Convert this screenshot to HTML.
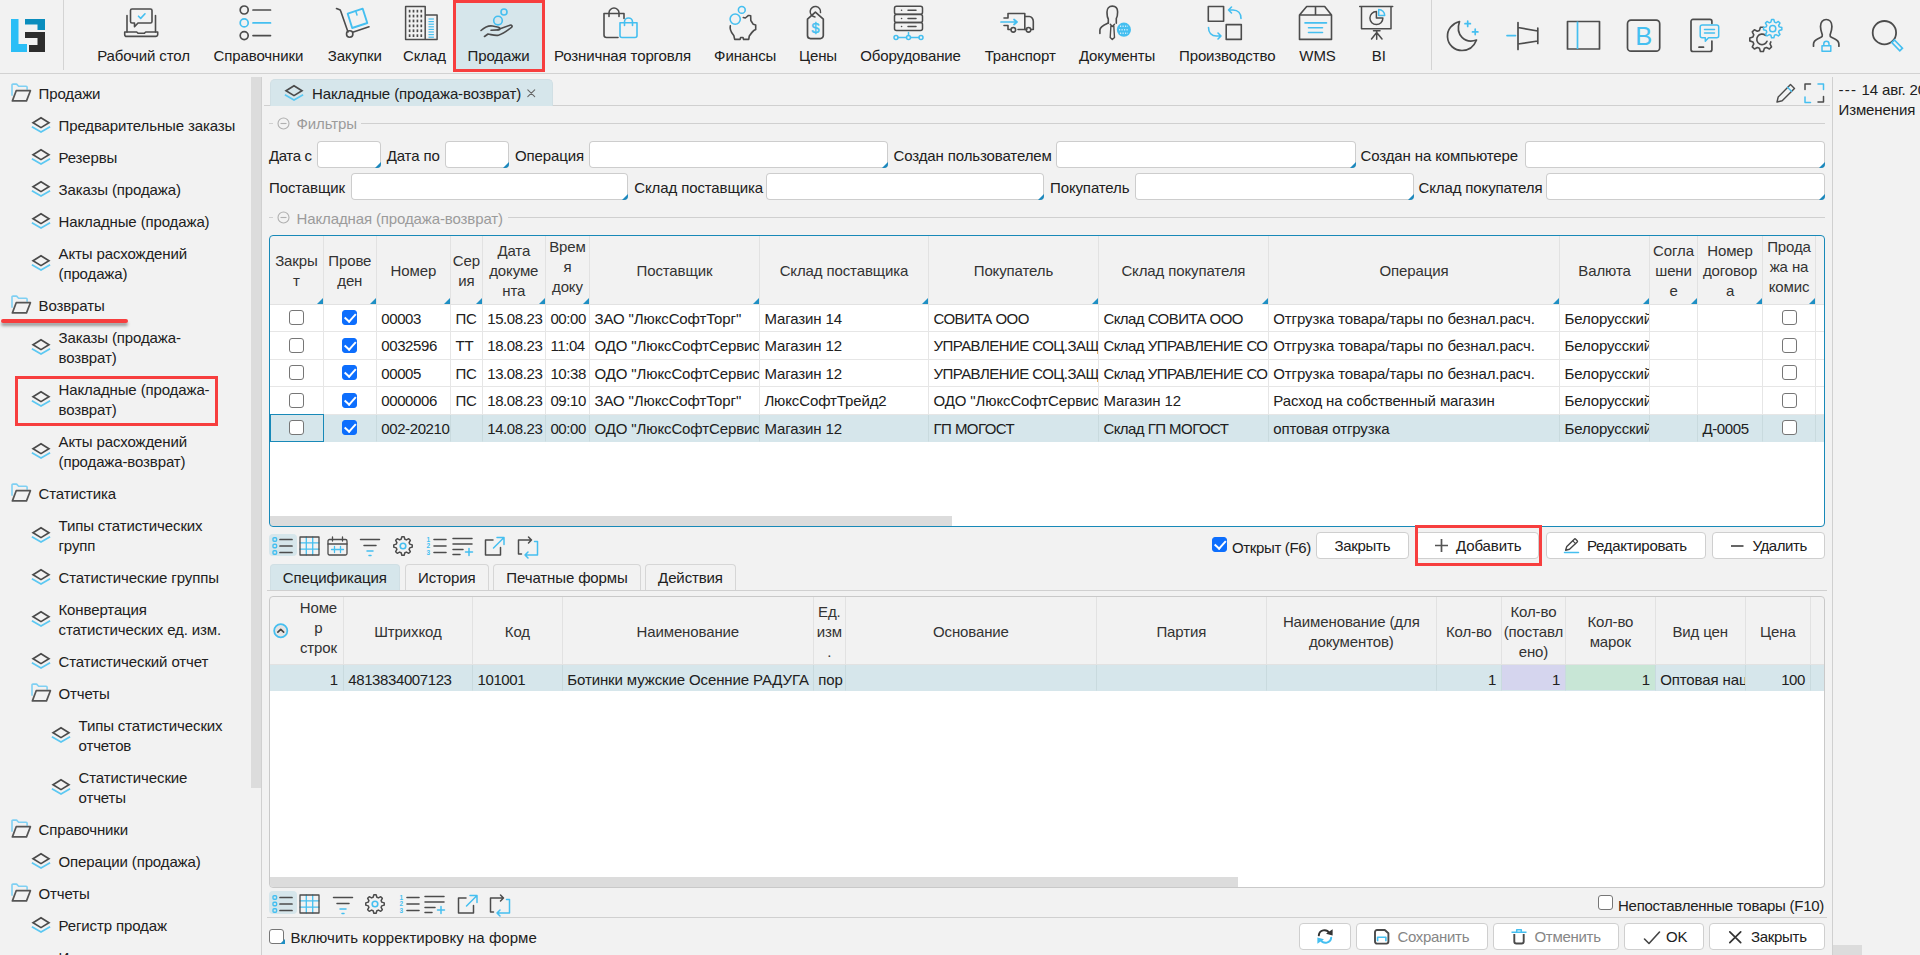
<!DOCTYPE html>
<html lang="ru"><head><meta charset="utf-8"><title>Накладные (продажа-возврат)</title>
<style>
*{box-sizing:border-box;margin:0;padding:0}
html,body{width:1920px;height:955px;overflow:hidden;background:#f2f2f2}
body{font-family:"Liberation Sans",sans-serif;font-size:15px;color:#202020;letter-spacing:-0.12px;position:relative;line-height:20px}
.abs{position:absolute}
svg{display:block;overflow:visible}
/* top bar */
#top{position:absolute;left:0;top:0;width:1920px;height:74px;border-bottom:1px solid #d2d2d2}
.vsep{position:absolute;top:0;width:1px;height:70px;background:#d4d4d4}
.ti{position:absolute;top:0;height:71px;width:180px;margin-left:-90px;text-align:center;white-space:nowrap}
.ti span{position:absolute;left:0;right:0;top:46px;line-height:20px}
.ti svg{position:absolute;left:50%;top:3px;margin-left:-22px}
.ri{position:absolute;top:18px}
#selbox{position:absolute;left:452.5px;top:-0.5px;width:92px;height:72.5px;background:#d6e6eb;border:3px solid #f73e3e}
/* sidebar */
#side{position:absolute;left:0;top:74px;width:262px;height:881px;overflow:hidden}
#sthumb{position:absolute;left:251px;top:77px;width:10px;height:711px;background:#dcdcdc}
#sline{position:absolute;left:261px;top:77px;width:1px;height:878px;background:#d0d0d0}
.tn{position:absolute;left:0;white-space:nowrap;line-height:20px}
/* main */
.hl{position:absolute;height:1px;background:#d0d0d0}
.inp{position:absolute;height:26px;background:#fff;box-shadow:inset 0 0 0 1px #cdcdcd;border-radius:4px;overflow:hidden}
.inp:after{content:"";position:absolute;right:0;bottom:0;border-style:solid;border-width:0 0 6px 6px;border-color:transparent transparent #1b88bd transparent}
.lbl{position:absolute;white-space:nowrap;line-height:20px}
.gray{color:#9b9b9b}
.grid{position:absolute;background:#fff;border-radius:4px;overflow:hidden}
.gb{position:absolute;border-radius:4px;pointer-events:none}
.hc{position:absolute;top:0;background:#f2f2f2;border-right:1px solid #e2e2e2;border-bottom:1px solid #e2e2e2;display:flex;align-items:center;justify-content:center;text-align:center;color:#333;overflow:hidden;white-space:nowrap;padding:2.5px 0 0 0}
.hc.tri:after{content:"";position:absolute;right:0;bottom:0;border-style:solid;border-width:0 0 6px 6px;border-color:transparent transparent #1e8fc4 transparent}
.row{position:absolute;left:0;height:28px}
.c{position:absolute;top:0;height:100%;border-right:1px solid #e6e6e6;border-bottom:1px solid #e6e6e6;white-space:nowrap;overflow:hidden;padding:4px 0 0 4.5px;line-height:20px}
.c.r{text-align:right;padding-right:5px}
.sel .c{background:#d6e6eb;border-right-color:#c9dade;border-bottom-color:#d6e6eb}
.cb{position:absolute;width:15px;height:15px;border:1.5px solid #767676;border-radius:3px;background:#fff}
.cb.on{background:#0d6efd;border-color:#0d6efd}
.cb.on:after{content:"";position:absolute;left:3.6px;top:0.4px;width:4.5px;height:8.5px;border:solid #fff;border-width:0 2px 2px 0;transform:rotate(42deg)}
.btn{position:absolute;height:27px;background:#fff;border:1px solid #cfcfcf;border-radius:4px;white-space:nowrap;line-height:20px}
.btn span{position:absolute;top:3px}
.btn svg{position:absolute}
.tab{position:absolute;border:1px solid #d6d6d6;border-bottom:none;border-radius:4px 4px 0 0;text-align:center;white-space:nowrap}
.tab.on{background:#d6e6eb;border-color:#d0dfe4}
.tb{position:absolute}
.num{letter-spacing:-0.4px}
.uc{letter-spacing:-0.55px}
</style></head><body>
<div id="top">
<div class="abs" style="left:11px;top:19px"><svg width="34" height="33" viewBox="0 0 34 33"><path d="M0 0h7.5v25h8.5v8H0z" fill="#2bbef6"/><path d="M14 0h20v11h-7.5V5.5H14z" fill="#0a8dbd"/><path d="M14 13h20v20H18v-7h8.5v-7H14z" fill="#2d2d2d"/></svg></div>
<div class="vsep" style="left:63px"></div>
<div id="selbox"></div>
<div class="ti" style="left:143.5px"><svg width="44" height="40" viewBox="0 0 44 40" fill="none" stroke="#4c4c4c" stroke-width="1.6" stroke-linecap="round" stroke-linejoin="round"><path d="M5 12.6v16.4M33.5 12.6v16.4"/><path d="M2.7 29h12l1.5 1.3h6l1.5-1.3h12v2.4a2 2 0 0 1-2 2H4.7a2 2 0 0 1-2-2z"/><path d="M10 6h18.5a1.5 1.5 0 0 1 1.5 1.5v11a1.5 1.5 0 0 1-1.5 1.5H16l-3.5 3.7V20H10a1.5 1.5 0 0 1-1.5-1.5v-11A1.5 1.5 0 0 1 10 6z"/><path d="M16.5 13.2l2.2 2.2 4.3-4.6" stroke="#45bff0"/></svg><span>Рабочий стол</span></div>
<div class="ti" style="left:258.4px"><svg width="44" height="40" viewBox="0 0 44 40" fill="none" stroke="#4c4c4c" stroke-width="1.7" stroke-linecap="round" stroke-linejoin="round"><circle cx="8.2" cy="7" r="4"/><path d="M17 7h17.5"/><circle cx="8.2" cy="19.9" r="4" stroke="#45bff0"/><path d="M17 19.9h17.5" stroke="#45bff0"/><circle cx="8.2" cy="32.6" r="4"/><path d="M17 32.6h17.5"/></svg><span>Справочники</span></div>
<div class="ti" style="left:354.8px"><svg width="44" height="40" viewBox="0 0 44 40" fill="none" stroke="#4c4c4c" stroke-width="1.6" stroke-linecap="round" stroke-linejoin="round"><path d="M3.5 5.5l3.2 1.3a1.5 1.5 0 0 1 .9 1L15 29"/><circle cx="16.7" cy="31" r="3.2"/><path d="M19.7 29.3L36 23.8"/><path d="M14.7 10.7l15-5 4.6 14.3-15.1 5z" stroke="#45bff0" stroke-width="1.9"/><path d="M22.7 8.1l1.3 4 " stroke="#45bff0" stroke-width="1.5"/></svg><span>Закупки</span></div>
<div class="ti" style="left:424.4px"><svg width="44" height="40" viewBox="0 0 44 40" fill="none" stroke="#4c4c4c" stroke-width="1.5" stroke-linecap="round" stroke-linejoin="round"><path d="M3.6 36.4V3.5h19.6v32.9zM23.2 12h11.9v24.4H23.2"/><path d="M7.6 6.8v2.700" stroke-width="1.700" stroke-linecap="butt"/><path d="M11.5 6.8v2.700" stroke-width="1.700" stroke-linecap="butt"/><path d="M15.4 6.8v2.700" stroke-width="1.700" stroke-linecap="butt"/><path d="M19.3 6.8v2.700" stroke-width="1.700" stroke-linecap="butt"/><path d="M7.6 11.7v2.700" stroke-width="1.700" stroke-linecap="butt"/><path d="M11.5 11.7v2.700" stroke-width="1.700" stroke-linecap="butt"/><path d="M15.4 11.7v2.700" stroke-width="1.700" stroke-linecap="butt"/><path d="M19.3 11.7v2.700" stroke-width="1.700" stroke-linecap="butt"/><path d="M7.6 16.6v2.700" stroke-width="1.700" stroke-linecap="butt"/><path d="M11.5 16.6v2.700" stroke-width="1.700" stroke-linecap="butt"/><path d="M15.4 16.6v2.700" stroke-width="1.700" stroke-linecap="butt"/><path d="M19.3 16.6v2.700" stroke-width="1.700" stroke-linecap="butt"/><path d="M7.6 21.5v2.700" stroke-width="1.700" stroke-linecap="butt"/><path d="M11.5 21.5v2.700" stroke-width="1.700" stroke-linecap="butt"/><path d="M15.4 21.5v2.700" stroke-width="1.700" stroke-linecap="butt"/><path d="M19.3 21.5v2.700" stroke-width="1.700" stroke-linecap="butt"/><path d="M7.6 26.4v2.700" stroke-width="1.700" stroke-linecap="butt"/><path d="M11.5 26.4v2.700" stroke-width="1.700" stroke-linecap="butt"/><path d="M15.4 26.4v2.700" stroke-width="1.700" stroke-linecap="butt"/><path d="M19.3 26.4v2.700" stroke-width="1.700" stroke-linecap="butt"/><path d="M7.6 31.3v2.700" stroke-width="1.700" stroke-linecap="butt"/><path d="M11.5 31.3v2.700" stroke-width="1.700" stroke-linecap="butt"/><path d="M15.4 31.3v2.700" stroke-width="1.700" stroke-linecap="butt"/><path d="M19.3 31.3v2.700" stroke-width="1.700" stroke-linecap="butt"/><path d="M26.5 16.0h5.4" stroke="#45bff0" stroke-width="1.2" stroke-linecap="butt"/><path d="M26.5 18.6h5.4" stroke="#45bff0" stroke-width="1.2" stroke-linecap="butt"/><path d="M26.5 21.2h5.4" stroke="#45bff0" stroke-width="1.2" stroke-linecap="butt"/><path d="M26.5 23.8h5.4" stroke="#45bff0" stroke-width="1.2" stroke-linecap="butt"/><path d="M26.5 26.4h5.4" stroke="#45bff0" stroke-width="1.2" stroke-linecap="butt"/><path d="M26.5 29.0h5.4" stroke="#45bff0" stroke-width="1.2" stroke-linecap="butt"/><path d="M26.5 31.6h5.4" stroke="#45bff0" stroke-width="1.2" stroke-linecap="butt"/><path d="M26.5 34.2h5.4" stroke="#45bff0" stroke-width="1.2" stroke-linecap="butt"/></svg><span>Склад</span></div>
<div class="ti" style="left:498.5px"><svg width="44" height="40" viewBox="0 0 44 40" fill="none" stroke="#4c4c4c" stroke-width="1.6" stroke-linecap="round" stroke-linejoin="round"><path d="M4 27.5c4-3.5 8-5.2 11.5-4.5l6 1.2c2 .4 1.8 2.6 0 2.7l-7.5.4"/><path d="M21 26.6l12-4.4c1.7-.6 2.8 1.2 1.5 2.2-4 3.2-9 6.800-13 7.8-3.500.9-7.5-.8-10.500-1.200L7.500 33.500"/><circle cx="21" cy="17.600" r="4.300" stroke="#45bff0"/><circle cx="27" cy="9" r="3" stroke="#45bff0"/></svg><span>Продажи</span></div>
<div class="ti" style="left:622.5px"><svg width="44" height="40" viewBox="0 0 44 40" fill="none" stroke="#4c4c4c" stroke-width="1.6" stroke-linecap="round" stroke-linejoin="round"><path d="M17 34.500H5.500a2.500 2.500 0 0 1-2.500-2.500V10.500h20v5"/><path d="M8 13.500V10a5 5 0 0 1 10 0v3.500"/><path d="M19 19.800h17v12.700a2 2 0 0 1-2 2H21a2 2 0 0 1-2-2z" stroke="#45bff0"/><path d="M23.500 22.500v-3.500a4 4 0 0 1 8 0v3.500" stroke="#45bff0"/></svg><span>Розничная торговля</span></div>
<div class="ti" style="left:745.2px"><svg width="44" height="40" viewBox="0 0 44 40" fill="none" stroke="#4c4c4c" stroke-width="1.6" stroke-linecap="round" stroke-linejoin="round"><path d="M7.300 22.800C6.300 27.500 9.300 30.500 10.800 32.500L11.700 36.400H17.100L17.600 34.500H20L20.600 36.400H25.700L26.300 33C28 30.500 29.500 28.500 30.800 27.500L32.700 26.500V22L30.300 21.300C29.500 20 28.500 18.500 27.800 17.500L27.700 12.700C26.500 12.300 25.500 12.500 25.200 12.600L22.300 15 20.300 14.500"/><circle cx="12.200" cy="16.100" r="5.100" stroke="#45bff0"/><circle cx="18.800" cy="6.900" r="3.400" stroke="#45bff0"/></svg><span>Финансы</span></div>
<div class="ti" style="left:818px"><svg width="44" height="40" viewBox="0 0 44 40" fill="none" stroke="#4c4c4c" stroke-width="1.6" stroke-linecap="round" stroke-linejoin="round"><path d="M19.400 9.200L27.300 16.200V32.600a3 3 0 0 1-3 3H14.500a3 3 0 0 1-3-3V16.200z" stroke-width="1.700"/><path d="M24.500 9.600A5.200 5.200 0 1 0 19 13.900" stroke-width="1.500"/><text x="19.400" y="30.300" font-family="Liberation Sans,sans-serif" font-size="14.500" text-anchor="middle" fill="#45bff0" stroke="#45bff0" stroke-width=".4">$</text></svg><span>Цены</span></div>
<div class="ti" style="left:910.5px"><svg width="44" height="40" viewBox="0 0 44 40" fill="none" stroke="#4c4c4c" stroke-width="1.5" stroke-linecap="round" stroke-linejoin="round"><rect x="5.500" y="3.3" width="28" height="8" rx="2"/><path d="M12.500 7.3h.1"/><path d="M19 7.3h8" /><rect x="5.500" y="11.4" width="28" height="8" rx="2"/><path d="M12.500 15.4h.1"/><path d="M19 15.4h8" /><rect x="5.500" y="19.5" width="28" height="8" rx="2"/><path d="M12.500 23.5h.1"/><path d="M19 23.5h8" /><path d="M9 34.500h8.500M21.500 34.500H30M19.500 29.500v3" stroke="#45bff0"/><circle cx="7" cy="34.500" r="2" stroke="#45bff0"/><circle cx="19.500" cy="34.500" r="2" stroke="#45bff0"/><circle cx="32" cy="34.500" r="2" stroke="#45bff0"/></svg><span>Оборудование</span></div>
<div class="ti" style="left:1020.2px"><svg width="44" height="40" viewBox="0 0 44 40" fill="none" stroke="#4c4c4c" stroke-width="1.6" stroke-linecap="round" stroke-linejoin="round"><path d="M6 15h4v-4.500h16.800V26.500H20M12.500 26.500H10v-4H6"/><path d="M26.800 13.500h4.500c2.200 0 4 2.500 4 5v8h-1.800M26.800 26.500h2"/><circle cx="15.300" cy="26.800" r="2.300"/><circle cx="30.500" cy="26.800" r="2.300"/><path d="M3 19h16M16 16.500l3 2.500-3 2.500" stroke="#45bff0" stroke-width="1.700"/></svg><span>Транспорт</span></div>
<div class="ti" style="left:1117px"><svg width="44" height="40" viewBox="0 0 44 40" fill="none" stroke="#4c4c4c" stroke-width="1.6" stroke-linecap="round" stroke-linejoin="round"><path d="M13.300 20V16C12.300 14.500 12 13 12 9 12 5.500 14 3.100 17.300 3.100S22.600 5.500 22.600 9C22.600 12.500 22.300 14 21.300 15.500V20.300"/><path d="M13.300 20C9 22 5 23.500 4.900 27V30.500"/><path d="M15.300 21.300l2 2.200 2.200-2.200M15.900 23l-.7 11.500 2.100 2.100 2.200-2.100-.7-11.500" stroke-width="1.400"/><circle cx="28.900" cy="26.700" r="7.100" fill="#45bff0" stroke="none"/><path d="M24 26.700h10M25 23.200h8M25 30.200h8" stroke="#c9ecfb" stroke-width="1.400" stroke-dasharray="1.200 1.300" stroke-linecap="butt"/></svg><span>Документы</span></div>
<div class="ti" style="left:1227.2px"><svg width="44" height="40" viewBox="0 0 44 40" fill="none" stroke="#4c4c4c" stroke-width="1.6" stroke-linecap="round" stroke-linejoin="round"><rect x="3.300" y="3.500" width="15.300" height="14.700"/><rect x="21.200" y="21.600" width="15.100" height="14.800"/><path d="M36 15.500c0-5-3-8.500-8-8.500h-4.500M26.500 4l-3 3 3 3" stroke="#45bff0"/><path d="M3.500 24.500c0 5 3 8.500 8 8.500H16M13 30l3 3-3 3" stroke="#45bff0"/></svg><span>Производство</span></div>
<div class="ti" style="left:1317.5px"><svg width="44" height="40" viewBox="0 0 44 40" fill="none" stroke="#4c4c4c" stroke-width="1.6" stroke-linecap="round" stroke-linejoin="round"><path d="M3.500 12h32v24.400h-32zM3.500 12l7.200-8.500h18l6.800 8.500M19.500 3.500V12"/><path d="M9 19.900h21.500M12.500 24.700h14M12.500 29.500h14" stroke="#45bff0"/></svg><span>WMS</span></div>
<div class="ti" style="left:1378.8px"><svg width="44" height="40" viewBox="0 0 44 40" fill="none" stroke="#4c4c4c" stroke-width="1.5" stroke-linecap="round" stroke-linejoin="round"><path d="M2.700 3.500h33M4.500 3.500v22.200h29.500V3.500"/><path d="M19.400 8.600a6.500 6.500 0 1 0 6.500 6.500h-6.500z"/><path d="M21.700 6.500v6h6a6 6 0 0 0-6-6z" stroke="#45bff0"/><path d="M16.500 27.700h6.500M19.700 27.700v8.500M19.700 29.500l-5.200 6.500M19.700 29.500l5.300 6.500"/></svg><span>BI</span></div>
<div class="vsep" style="left:1431px"></div>
<div class="ri" style="left:1445px"><svg width="36" height="36" viewBox="0 0 36 36" fill="none" stroke="#4c4c4c" stroke-width="1.7" stroke-linecap="round" stroke-linejoin="round"><path d="M14.500 3.500C7 5.500 2 11.500 2.500 19 3 27 9.500 32.500 17 32.500c6.500 0 12-4 14.500-10.500C20 26 10 17 14.500 3.500z"/><path d="M22.700 3v5.400M20 5.700h5.400M30.200 11.200v5.400M27.500 13.900h5.400" stroke="#45bff0"/></svg></div>
<div class="ri" style="left:1505px"><svg width="36" height="36" viewBox="0 0 36 36" fill="none" stroke="#4c4c4c" stroke-width="1.7" stroke-linecap="round" stroke-linejoin="round"><path d="M2 17.600h8.500" stroke="#45bff0"/><path d="M13 4.500v27M13 9.500l19.700 3.500M13 26l19.700-3M32.800 10v15.500"/></svg></div>
<div class="ri" style="left:1566px"><svg width="36" height="36" viewBox="0 0 36 36" fill="none" stroke="#4c4c4c" stroke-width="1.7" stroke-linecap="round" stroke-linejoin="round"><rect x="1.500" y="3.500" width="32" height="27.500"/><path d="M11.500 3.500v27.500" stroke="#45bff0" stroke-linecap="butt"/></svg></div>
<div class="ri" style="left:1626px"><svg width="36" height="36" viewBox="0 0 36 36" fill="none" stroke="#4c4c4c" stroke-width="1.7" stroke-linecap="round" stroke-linejoin="round"><rect x="1.500" y="2.200" width="32.200" height="31" rx="3.500"/><text x="17.800" y="27" font-family="Liberation Sans,sans-serif" font-size="25.500" text-anchor="middle" fill="#45bff0" stroke="none">B</text></svg></div>
<div class="ri" style="left:1687px"><svg width="36" height="36" viewBox="0 0 36 36" fill="none" stroke="#4c4c4c" stroke-width="1.7" stroke-linecap="round" stroke-linejoin="round"><path d="M24.900 5.500V3.400a2 2 0 0 0-2-2H6a2 2 0 0 0-2 2V31.500a2 2 0 0 0 2 2h16.900a2 2 0 0 0 2-2V23"/><path d="M12 29.200h4.500"/><path d="M15.200 7h14.500a2 2 0 0 1 2 2v8.700a2 2 0 0 1-2 2H21.500l-3.200 3.600v-3.600h-3.100a2 2 0 0 1-2-2V9a2 2 0 0 1 2-2z" stroke="#45bff0" stroke-width="1.500"/><path d="M17.500 11.500h10M17.500 15h10" stroke="#45bff0" stroke-width="1.500"/></svg></div>
<div class="ri" style="left:1748px"><svg width="36" height="36" viewBox="0 0 36 36" fill="none" stroke="#4c4c4c" stroke-width="1.7" stroke-linecap="round" stroke-linejoin="round"><path d="M22.86 23.89 L22.00 25.98 L23.51 28.92 L21.42 31.01 L18.48 29.50 L16.39 30.36 L15.38 33.51 L12.42 33.51 L11.41 30.36 L9.32 29.50 L6.38 31.01 L4.29 28.92 L5.80 25.98 L4.94 23.89 L1.79 22.88 L1.79 19.92 L4.94 18.91 L5.80 16.82 L4.29 13.88 L6.38 11.79 L9.32 13.30 L11.41 12.44 L12.42 9.29 L15.38 9.29" stroke="#4c4c4c" stroke-width="1.6"/><path d="M17.500 17.300a5.300 5.300 0 1 0 1.500 6" /><path d="M33.83 9.58 L33.83 11.82 L31.25 12.52 L30.62 14.05 L31.95 16.37 L30.37 17.95 L28.05 16.62 L26.52 17.25 L25.82 19.83 L23.58 19.83 L22.88 17.25 L21.35 16.62 L19.03 17.95 L17.45 16.37 L18.78 14.05 L18.15 12.52 L15.57 11.82 L15.57 9.58 L18.15 8.88 L18.78 7.35 L17.45 5.03 L19.03 3.45 L21.35 4.78 L22.88 4.15 L23.58 1.57 L25.82 1.57 L26.52 4.15 L28.05 4.78 L30.37 3.45 L31.95 5.03 L30.62 7.35 L31.25 8.88z" stroke="#45bff0" stroke-width="1.5"/><circle cx="24.700" cy="10.700" r="3.100" stroke="#45bff0" stroke-width="1.500"/></svg></div>
<div class="ri" style="left:1808px"><svg width="36" height="36" viewBox="0 0 36 36" fill="none" stroke="#4c4c4c" stroke-width="1.7" stroke-linecap="round" stroke-linejoin="round"><path d="M5.500 28.200v-2c0-2.500 1.500-4 4-5.200l3.500-1.700c1-.5 1.500-1.200 1.300-2.500-.8-2.200-1.800-4.800-1.800-8.300 0-4.500 2.500-7 5.700-7s5.700 2.500 5.700 7c0 3.500-1 6-1.800 8.300-.2 1.300.3 2 1.300 2.500l3.500 1.700c2.500 1.200 4 2.700 4 5.200v2"/><rect x="14" y="27.700" width="8.800" height="5.600" stroke="#45bff0" stroke-width="1.500"/><path d="M15.800 27.500v-1.700a2.600 2.600 0 0 1 5.200 0v1.700" stroke="#45bff0" stroke-width="1.500"/></svg></div>
<div class="ri" style="left:1869px"><svg width="36" height="36" viewBox="0 0 36 36" fill="none" stroke="#4c4c4c" stroke-width="1.7" stroke-linecap="round" stroke-linejoin="round"><circle cx="15.400" cy="14.700" r="11.700" stroke-width="1.800"/><path d="M22.800 24.600l2.600-2.600 8 8.200-2.600 2.600z" stroke="#45bff0" stroke-linejoin="miter"/></svg></div>
</div>
<div id="side">
<div class="tn" style="top:4px;height:32px;padding:6px 0 0 38.5px"><span class="abs" style="left:10px;top:6.0px"><svg width="22" height="20" viewBox="0 0 22 20" fill="none" stroke-width="1.600" stroke-linejoin="round"><g transform="translate(0,-0.7)"><path d="M2 12.500V1.800a1 1 0 0 1 1-1h3.600l2 2.200h7.500a1 1 0 0 1 1 1v2.500" stroke="#7fd0f3"/><path d="M6.200 7.400h14.200l-3.900 10.200H2.400z" stroke="#555" stroke-width="1.700"/></g></svg></span>Продажи</div>
<div class="tn" style="top:36px;height:32px;padding:6px 0 0 58.5px"><span class="abs" style="left:30px;top:6.0px"><svg width="22" height="20" viewBox="0 0 22 20" fill="none" stroke-width="1.600" stroke-linejoin="miter"><path d="M1.900 10.700l9.100 5.400 9.100-5.400" stroke="#5cc8f2" stroke-width="1.700"/><path d="M3.050 6.700L11 1.800l7.950 4.900L11 11.600z" stroke="#4a4a4a" stroke-width="1.700"/></svg></span>Предварительные заказы</div>
<div class="tn" style="top:68px;height:32px;padding:6px 0 0 58.5px"><span class="abs" style="left:30px;top:6.0px"><svg width="22" height="20" viewBox="0 0 22 20" fill="none" stroke-width="1.600" stroke-linejoin="miter"><path d="M1.900 10.700l9.100 5.400 9.100-5.400" stroke="#5cc8f2" stroke-width="1.700"/><path d="M3.050 6.700L11 1.800l7.950 4.900L11 11.600z" stroke="#4a4a4a" stroke-width="1.700"/></svg></span>Резервы</div>
<div class="tn" style="top:100px;height:32px;padding:6px 0 0 58.5px"><span class="abs" style="left:30px;top:6.0px"><svg width="22" height="20" viewBox="0 0 22 20" fill="none" stroke-width="1.600" stroke-linejoin="miter"><path d="M1.900 10.700l9.100 5.400 9.100-5.400" stroke="#5cc8f2" stroke-width="1.700"/><path d="M3.050 6.700L11 1.800l7.950 4.900L11 11.600z" stroke="#4a4a4a" stroke-width="1.700"/></svg></span>Заказы (продажа)</div>
<div class="tn" style="top:132px;height:32px;padding:6px 0 0 58.5px"><span class="abs" style="left:30px;top:6.0px"><svg width="22" height="20" viewBox="0 0 22 20" fill="none" stroke-width="1.600" stroke-linejoin="miter"><path d="M1.900 10.700l9.100 5.400 9.100-5.400" stroke="#5cc8f2" stroke-width="1.700"/><path d="M3.050 6.700L11 1.800l7.950 4.900L11 11.600z" stroke="#4a4a4a" stroke-width="1.700"/></svg></span>Накладные (продажа)</div>
<div class="tn" style="top:164px;height:52px;padding:6px 0 0 58.5px"><span class="abs" style="left:30px;top:16.0px"><svg width="22" height="20" viewBox="0 0 22 20" fill="none" stroke-width="1.600" stroke-linejoin="miter"><path d="M1.900 10.700l9.100 5.400 9.100-5.400" stroke="#5cc8f2" stroke-width="1.700"/><path d="M3.050 6.700L11 1.800l7.950 4.900L11 11.600z" stroke="#4a4a4a" stroke-width="1.700"/></svg></span>Акты расхождений<br>(продажа)</div>
<div class="tn" style="top:216px;height:32px;padding:6px 0 0 38.5px"><span class="abs" style="left:10px;top:6.0px"><svg width="22" height="20" viewBox="0 0 22 20" fill="none" stroke-width="1.600" stroke-linejoin="round"><g transform="translate(0,-0.7)"><path d="M2 12.500V1.800a1 1 0 0 1 1-1h3.600l2 2.200h7.500a1 1 0 0 1 1 1v2.500" stroke="#7fd0f3"/><path d="M6.200 7.400h14.200l-3.900 10.200H2.400z" stroke="#555" stroke-width="1.700"/></g></svg></span>Возвраты</div>
<div class="tn" style="top:248px;height:52px;padding:6px 0 0 58.5px"><span class="abs" style="left:30px;top:16.0px"><svg width="22" height="20" viewBox="0 0 22 20" fill="none" stroke-width="1.600" stroke-linejoin="miter"><path d="M1.900 10.700l9.100 5.400 9.100-5.400" stroke="#5cc8f2" stroke-width="1.700"/><path d="M3.050 6.700L11 1.800l7.950 4.900L11 11.600z" stroke="#4a4a4a" stroke-width="1.700"/></svg></span>Заказы (продажа-<br>возврат)</div>
<div class="tn" style="top:300px;height:52px;padding:6px 0 0 58.5px"><span class="abs" style="left:30px;top:16.0px"><svg width="22" height="20" viewBox="0 0 22 20" fill="none" stroke-width="1.600" stroke-linejoin="miter"><path d="M1.900 10.700l9.100 5.400 9.100-5.400" stroke="#5cc8f2" stroke-width="1.700"/><path d="M3.050 6.700L11 1.800l7.950 4.900L11 11.600z" stroke="#4a4a4a" stroke-width="1.700"/></svg></span>Накладные (продажа-<br>возврат)</div>
<div class="tn" style="top:352px;height:52px;padding:6px 0 0 58.5px"><span class="abs" style="left:30px;top:16.0px"><svg width="22" height="20" viewBox="0 0 22 20" fill="none" stroke-width="1.600" stroke-linejoin="miter"><path d="M1.900 10.700l9.100 5.400 9.100-5.400" stroke="#5cc8f2" stroke-width="1.700"/><path d="M3.050 6.700L11 1.800l7.950 4.900L11 11.600z" stroke="#4a4a4a" stroke-width="1.700"/></svg></span>Акты расхождений<br>(продажа-возврат)</div>
<div class="tn" style="top:404px;height:32px;padding:6px 0 0 38.5px"><span class="abs" style="left:10px;top:6.0px"><svg width="22" height="20" viewBox="0 0 22 20" fill="none" stroke-width="1.600" stroke-linejoin="round"><g transform="translate(0,-0.7)"><path d="M2 12.500V1.800a1 1 0 0 1 1-1h3.600l2 2.200h7.500a1 1 0 0 1 1 1v2.500" stroke="#7fd0f3"/><path d="M6.200 7.400h14.200l-3.900 10.200H2.400z" stroke="#555" stroke-width="1.700"/></g></svg></span>Статистика</div>
<div class="tn" style="top:436px;height:52px;padding:6px 0 0 58.5px"><span class="abs" style="left:30px;top:16.0px"><svg width="22" height="20" viewBox="0 0 22 20" fill="none" stroke-width="1.600" stroke-linejoin="miter"><path d="M1.900 10.700l9.100 5.400 9.100-5.400" stroke="#5cc8f2" stroke-width="1.700"/><path d="M3.050 6.700L11 1.800l7.950 4.900L11 11.600z" stroke="#4a4a4a" stroke-width="1.700"/></svg></span>Типы статистических<br>групп</div>
<div class="tn" style="top:488px;height:32px;padding:6px 0 0 58.5px"><span class="abs" style="left:30px;top:6.0px"><svg width="22" height="20" viewBox="0 0 22 20" fill="none" stroke-width="1.600" stroke-linejoin="miter"><path d="M1.900 10.700l9.100 5.400 9.100-5.400" stroke="#5cc8f2" stroke-width="1.700"/><path d="M3.050 6.700L11 1.800l7.950 4.900L11 11.600z" stroke="#4a4a4a" stroke-width="1.700"/></svg></span>Статистические группы</div>
<div class="tn" style="top:520px;height:52px;padding:6px 0 0 58.5px"><span class="abs" style="left:30px;top:16.0px"><svg width="22" height="20" viewBox="0 0 22 20" fill="none" stroke-width="1.600" stroke-linejoin="miter"><path d="M1.900 10.700l9.100 5.400 9.100-5.400" stroke="#5cc8f2" stroke-width="1.700"/><path d="M3.050 6.700L11 1.800l7.950 4.900L11 11.600z" stroke="#4a4a4a" stroke-width="1.700"/></svg></span>Конвертация<br>статистических ед. изм.</div>
<div class="tn" style="top:572px;height:32px;padding:6px 0 0 58.5px"><span class="abs" style="left:30px;top:6.0px"><svg width="22" height="20" viewBox="0 0 22 20" fill="none" stroke-width="1.600" stroke-linejoin="miter"><path d="M1.900 10.700l9.100 5.400 9.100-5.400" stroke="#5cc8f2" stroke-width="1.700"/><path d="M3.050 6.700L11 1.800l7.950 4.900L11 11.600z" stroke="#4a4a4a" stroke-width="1.700"/></svg></span>Статистический отчет</div>
<div class="tn" style="top:604px;height:32px;padding:6px 0 0 58.5px"><span class="abs" style="left:30px;top:6.0px"><svg width="22" height="20" viewBox="0 0 22 20" fill="none" stroke-width="1.600" stroke-linejoin="round"><g transform="translate(0,-0.7)"><path d="M2 12.500V1.800a1 1 0 0 1 1-1h3.600l2 2.200h7.500a1 1 0 0 1 1 1v2.500" stroke="#7fd0f3"/><path d="M6.200 7.400h14.200l-3.900 10.200H2.400z" stroke="#555" stroke-width="1.700"/></g></svg></span>Отчеты</div>
<div class="tn" style="top:636px;height:52px;padding:6px 0 0 78.5px"><span class="abs" style="left:50px;top:16.0px"><svg width="22" height="20" viewBox="0 0 22 20" fill="none" stroke-width="1.600" stroke-linejoin="miter"><path d="M1.900 10.700l9.100 5.400 9.100-5.400" stroke="#5cc8f2" stroke-width="1.700"/><path d="M3.050 6.700L11 1.800l7.950 4.900L11 11.600z" stroke="#4a4a4a" stroke-width="1.700"/></svg></span>Типы статистических<br>отчетов</div>
<div class="tn" style="top:688px;height:52px;padding:6px 0 0 78.5px"><span class="abs" style="left:50px;top:16.0px"><svg width="22" height="20" viewBox="0 0 22 20" fill="none" stroke-width="1.600" stroke-linejoin="miter"><path d="M1.900 10.700l9.100 5.400 9.100-5.400" stroke="#5cc8f2" stroke-width="1.700"/><path d="M3.050 6.700L11 1.800l7.950 4.900L11 11.600z" stroke="#4a4a4a" stroke-width="1.700"/></svg></span>Статистические<br>отчеты</div>
<div class="tn" style="top:740px;height:32px;padding:6px 0 0 38.5px"><span class="abs" style="left:10px;top:6.0px"><svg width="22" height="20" viewBox="0 0 22 20" fill="none" stroke-width="1.600" stroke-linejoin="round"><g transform="translate(0,-0.7)"><path d="M2 12.500V1.800a1 1 0 0 1 1-1h3.600l2 2.200h7.500a1 1 0 0 1 1 1v2.500" stroke="#7fd0f3"/><path d="M6.200 7.400h14.200l-3.900 10.200H2.400z" stroke="#555" stroke-width="1.700"/></g></svg></span>Справочники</div>
<div class="tn" style="top:772px;height:32px;padding:6px 0 0 58.5px"><span class="abs" style="left:30px;top:6.0px"><svg width="22" height="20" viewBox="0 0 22 20" fill="none" stroke-width="1.600" stroke-linejoin="miter"><path d="M1.900 10.700l9.100 5.400 9.100-5.400" stroke="#5cc8f2" stroke-width="1.700"/><path d="M3.050 6.700L11 1.800l7.950 4.900L11 11.600z" stroke="#4a4a4a" stroke-width="1.700"/></svg></span>Операции (продажа)</div>
<div class="tn" style="top:804px;height:32px;padding:6px 0 0 38.5px"><span class="abs" style="left:10px;top:6.0px"><svg width="22" height="20" viewBox="0 0 22 20" fill="none" stroke-width="1.600" stroke-linejoin="round"><g transform="translate(0,-0.7)"><path d="M2 12.500V1.800a1 1 0 0 1 1-1h3.600l2 2.200h7.500a1 1 0 0 1 1 1v2.500" stroke="#7fd0f3"/><path d="M6.200 7.400h14.200l-3.900 10.200H2.400z" stroke="#555" stroke-width="1.700"/></g></svg></span>Отчеты</div>
<div class="tn" style="top:836px;height:32px;padding:6px 0 0 58.5px"><span class="abs" style="left:30px;top:6.0px"><svg width="22" height="20" viewBox="0 0 22 20" fill="none" stroke-width="1.600" stroke-linejoin="miter"><path d="M1.900 10.700l9.100 5.400 9.100-5.400" stroke="#5cc8f2" stroke-width="1.700"/><path d="M3.050 6.700L11 1.800l7.950 4.900L11 11.600z" stroke="#4a4a4a" stroke-width="1.700"/></svg></span>Регистр продаж</div>
<div class="tn" style="top:868px;height:52px;padding:6px 0 0 58.5px"><span class="abs" style="left:30px;top:16.0px"><svg width="22" height="20" viewBox="0 0 22 20" fill="none" stroke-width="1.600" stroke-linejoin="miter"><path d="M1.900 10.700l9.100 5.400 9.100-5.400" stroke="#5cc8f2" stroke-width="1.700"/><path d="M3.050 6.700L11 1.800l7.950 4.900L11 11.600z" stroke="#4a4a4a" stroke-width="1.700"/></svg></span>История изменения<br>цен</div>
</div>
<div id="sthumb"></div><div id="sline"></div>
<div class="abs" style="left:1.2px;top:318.8px;width:126.7px;height:4.2px;background:#f73e3e;border-radius:2.1px;box-shadow:0 3px 3px rgba(0,0,0,.35)"></div>
<div class="abs" style="left:15px;top:376px;width:203px;height:50px;border:3px solid #f73e3e"></div>
<div class="hl" style="left:264px;top:105px;width:1566px"></div>
<div class="tab on" style="left:270px;top:79px;width:282.5px;height:27px;text-align:left;border-radius:5px 5px 0 0"><span class="abs" style="left:12px;top:3.5px"><svg width="22" height="20" viewBox="0 0 22 20" fill="none" stroke-width="1.600" stroke-linejoin="miter"><path d="M1.900 10.700l9.100 5.400 9.100-5.400" stroke="#5cc8f2" stroke-width="1.700"/><path d="M3.050 6.700L11 1.800l7.950 4.900L11 11.600z" stroke="#4a4a4a" stroke-width="1.700"/></svg></span><span class="abs" style="left:41px;top:4px">Накладные (продажа-возврат)</span><span class="abs" style="left:256px;top:9px"><svg width="8.5" height="8.5" viewBox="0 0 8.5 8.5" stroke="#666" stroke-width="1.1" stroke-linecap="round"><path d="M.8 .8L7.7 7.7M7.7 .8L.8 7.7"/></svg></span></div>
<div class="abs" style="left:1775px;top:82px"><svg width="22" height="22" viewBox="0 0 22 22" fill="none" stroke="#4c4c4c" stroke-width="1.4" stroke-linecap="round" stroke-linejoin="round" ><path d="M2 20l1.200-5L15.500 2.500l4 4L7.200 18.800z"/><path d="M12.500 5.200l4 4" stroke="#45bff0"/></svg></div>
<div class="abs" style="left:1804px;top:83px"><svg width="20" height="20" viewBox="0 0 20 20" fill="none" stroke="#4c4c4c" stroke-width="1.5" stroke-linecap="round" stroke-linejoin="round" stroke-linecap="butt" stroke-linejoin="miter"><path d="M1 6.500V1h5.500M14 19h5.500v-5.500"/><path d="M14 1h5.500v5.500M1 14v5.500h5.500" stroke="#45bff0"/></svg></div>
<div class="hl" style="left:269px;top:123px;width:4px"></div><div class="abs" style="left:277px;top:117px"><svg width="13" height="13" viewBox="0 0 13 13" fill="none" stroke="#b0b0b0" stroke-width="1.100"><circle cx="6.500" cy="6.500" r="5.500"/><path d="M3.500 6.500h6"/></svg></div><div class="lbl gray" style="left:296.5px;top:114px">Фильтры</div><div class="hl" style="left:360.5px;top:123px;width:1464.5px"></div>
<div class="lbl" style="left:269px;top:146px"><span style="letter-spacing:-0.4px">Дата с</span></div><div class="inp" style="left:317px;top:141px;height:26.5px;width:63.5px"></div>
<div class="lbl" style="left:386.7px;top:146px">Дата по</div><div class="inp" style="left:445px;top:141px;height:26.5px;width:63.5px"></div>
<div class="lbl" style="left:515px;top:146px">Операция</div><div class="inp" style="left:589px;top:141px;height:26.5px;width:298.5px"></div>
<div class="lbl" style="left:893.5px;top:146px">Создан пользователем</div><div class="inp" style="left:1056px;top:141px;height:26.5px;width:299.5px"></div>
<div class="lbl" style="left:1360.5px;top:146px">Создан на компьютере</div><div class="inp" style="left:1524.5px;top:141px;height:26.5px;width:300.5px"></div>
<div class="lbl" style="left:269px;top:178px">Поставщик</div><div class="inp" style="left:351.3px;top:173px;height:26.5px;width:276.99999999999994px"></div>
<div class="lbl" style="left:634.3px;top:178px">Склад поставщика</div><div class="inp" style="left:766px;top:173px;height:26.5px;width:278px"></div>
<div class="lbl" style="left:1050px;top:178px">Покупатель</div><div class="inp" style="left:1135px;top:173px;height:26.5px;width:278.5px"></div>
<div class="lbl" style="left:1418.5px;top:178px">Склад покупателя</div><div class="inp" style="left:1545.8px;top:173px;height:26.5px;width:279.20000000000005px"></div>
<div class="hl" style="left:269px;top:217px;width:4px"></div><div class="abs" style="left:277px;top:211px"><svg width="13" height="13" viewBox="0 0 13 13" fill="none" stroke="#b0b0b0" stroke-width="1.100"><circle cx="6.500" cy="6.500" r="5.500"/><path d="M3.500 6.500h6"/></svg></div><div class="lbl gray" style="left:296.5px;top:209px">Накладная (продажа-возврат)</div><div class="hl" style="left:507.5px;top:217px;width:1317.5px"></div>
<div class="grid" style="left:270px;top:236px;width:1554px;height:290px">
<div class="hc tri" style="left:0px;width:53.8px;height:68.5px;padding-top:2.5px">Закры<br>т</div>
<div class="hc tri" style="left:53.8px;width:53.0px;height:68.5px;padding-top:2.5px">Прове<br>ден</div>
<div class="hc tri" style="left:106.8px;width:74.1px;height:68.5px;padding-top:2.5px">Номер</div>
<div class="hc tri" style="left:180.89999999999998px;width:31.8px;height:68.5px;padding-top:2.5px">Сер<br>ия</div>
<div class="hc tri" style="left:212.7px;width:63.2px;height:68.5px;padding-top:2.5px">Дата<br>докуме<br>нта</div>
<div class="hc tri" style="left:275.9px;width:44.1px;height:68.5px;padding-top:2.5px"><div style="position:relative;top:-4.2px">Врем<br>я<br>доку</div></div>
<div class="hc tri" style="left:320.0px;width:169.9px;height:68.5px;padding-top:2.5px">Поставщик</div>
<div class="hc tri" style="left:489.9px;width:169.1px;height:68.5px;padding-top:2.5px">Склад поставщика</div>
<div class="hc tri" style="left:659.0px;width:169.9px;height:68.5px;padding-top:2.5px">Покупатель</div>
<div class="hc tri" style="left:828.9px;width:169.9px;height:68.5px;padding-top:2.5px">Склад покупателя</div>
<div class="hc tri" style="left:998.8px;width:291.3px;height:68.5px;padding-top:2.5px">Операция</div>
<div class="hc tri" style="left:1290.1px;width:89.9px;height:68.5px;padding-top:2.5px">Валюта</div>
<div class="hc tri" style="left:1380.0px;width:48.0px;height:68.5px;padding-top:2.5px">Согла<br>шени<br>е</div>
<div class="hc tri" style="left:1428.0px;width:65.0px;height:68.5px;padding-top:2.5px">Номер<br>договор<br>а</div>
<div class="hc tri" style="left:1493.0px;width:53.0px;height:68.5px;padding-top:2.5px"><div style="position:relative;top:-4.2px">Прода<br>жа на<br>комис</div></div>
<div class="hc" style="left:1546.0px;width:10.0px;height:68.5px"></div>
<div class="row" style="top:68.5px;width:1554px;height:27.5px">
<div class="c" style="left:0px;width:53.8px;padding-top:4px;"><span class="cb" style="left:50%;margin-left:-7.5px;top:5.5px"></span></div>
<div class="c" style="left:53.8px;width:53.0px;padding-top:4px;"><span class="cb on" style="left:50%;margin-left:-7.5px;top:5.5px"></span></div>
<div class="c" style="left:106.8px;width:74.1px;padding-top:4px;"><span class="num">00003</span></div>
<div class="c" style="left:180.89999999999998px;width:31.8px;padding-top:4px;">ПС</div>
<div class="c" style="left:212.7px;width:63.2px;padding-top:4px;"><span class="num">15.08.23</span></div>
<div class="c" style="left:275.9px;width:44.1px;padding-top:4px;"><span class="num">00:00</span></div>
<div class="c" style="left:320.0px;width:169.9px;padding-top:4px;">ЗАО "ЛюксСофтТорг"</div>
<div class="c" style="left:489.9px;width:169.1px;padding-top:4px;">Магазин 14</div>
<div class="c" style="left:659.0px;width:169.9px;padding-top:4px;"><span class="uc">СОВИТА ООО</span></div>
<div class="c" style="left:828.9px;width:169.9px;padding-top:4px;"><span class="uc">Склад СОВИТА ООО</span></div>
<div class="c" style="left:998.8px;width:291.3px;padding-top:4px;">Отгрузка товара/тары по безнал.расч.</div>
<div class="c" style="left:1290.1px;width:89.9px;padding-top:4px;">Белорусский</div>
<div class="c" style="left:1380.0px;width:48.0px;padding-top:4px;"></div>
<div class="c" style="left:1428.0px;width:65.0px;padding-top:4px;"></div>
<div class="c" style="left:1493.0px;width:53.0px;padding-top:4px;"><span class="cb" style="left:50%;margin-left:-7.5px;top:5.5px"></span></div>
<div class="c" style="left:1546.0px;width:10.0px"></div>
</div>
<div class="row" style="top:96.0px;width:1554px;height:27.5px">
<div class="c" style="left:0px;width:53.8px;padding-top:4px;"><span class="cb" style="left:50%;margin-left:-7.5px;top:5.5px"></span></div>
<div class="c" style="left:53.8px;width:53.0px;padding-top:4px;"><span class="cb on" style="left:50%;margin-left:-7.5px;top:5.5px"></span></div>
<div class="c" style="left:106.8px;width:74.1px;padding-top:4px;"><span class="num">0032596</span></div>
<div class="c" style="left:180.89999999999998px;width:31.8px;padding-top:4px;">ТТ</div>
<div class="c" style="left:212.7px;width:63.2px;padding-top:4px;"><span class="num">18.08.23</span></div>
<div class="c" style="left:275.9px;width:44.1px;padding-top:4px;"><span class="num">11:04</span></div>
<div class="c" style="left:320.0px;width:169.9px;padding-top:4px;">ОДО "ЛюксСофтСервис"</div>
<div class="c" style="left:489.9px;width:169.1px;padding-top:4px;">Магазин 12</div>
<div class="c" style="left:659.0px;width:169.9px;padding-top:4px;"><span class="uc">УПРАВЛЕНИЕ СОЦ.ЗАЩИТЫ</span></div>
<div class="c" style="left:828.9px;width:169.9px;padding-top:4px;"><span class="uc">Склад УПРАВЛЕНИЕ СОЦ.ЗАЩИТЫ</span></div>
<div class="c" style="left:998.8px;width:291.3px;padding-top:4px;">Отгрузка товара/тары по безнал.расч.</div>
<div class="c" style="left:1290.1px;width:89.9px;padding-top:4px;">Белорусский</div>
<div class="c" style="left:1380.0px;width:48.0px;padding-top:4px;"></div>
<div class="c" style="left:1428.0px;width:65.0px;padding-top:4px;"></div>
<div class="c" style="left:1493.0px;width:53.0px;padding-top:4px;"><span class="cb" style="left:50%;margin-left:-7.5px;top:5.5px"></span></div>
<div class="c" style="left:1546.0px;width:10.0px"></div>
</div>
<div class="row" style="top:123.5px;width:1554px;height:27.5px">
<div class="c" style="left:0px;width:53.8px;padding-top:4px;"><span class="cb" style="left:50%;margin-left:-7.5px;top:5.5px"></span></div>
<div class="c" style="left:53.8px;width:53.0px;padding-top:4px;"><span class="cb on" style="left:50%;margin-left:-7.5px;top:5.5px"></span></div>
<div class="c" style="left:106.8px;width:74.1px;padding-top:4px;"><span class="num">00005</span></div>
<div class="c" style="left:180.89999999999998px;width:31.8px;padding-top:4px;">ПС</div>
<div class="c" style="left:212.7px;width:63.2px;padding-top:4px;"><span class="num">13.08.23</span></div>
<div class="c" style="left:275.9px;width:44.1px;padding-top:4px;"><span class="num">10:38</span></div>
<div class="c" style="left:320.0px;width:169.9px;padding-top:4px;">ОДО "ЛюксСофтСервис"</div>
<div class="c" style="left:489.9px;width:169.1px;padding-top:4px;">Магазин 12</div>
<div class="c" style="left:659.0px;width:169.9px;padding-top:4px;"><span class="uc">УПРАВЛЕНИЕ СОЦ.ЗАЩИТЫ</span></div>
<div class="c" style="left:828.9px;width:169.9px;padding-top:4px;"><span class="uc">Склад УПРАВЛЕНИЕ СОЦ.ЗАЩИТЫ</span></div>
<div class="c" style="left:998.8px;width:291.3px;padding-top:4px;">Отгрузка товара/тары по безнал.расч.</div>
<div class="c" style="left:1290.1px;width:89.9px;padding-top:4px;">Белорусский</div>
<div class="c" style="left:1380.0px;width:48.0px;padding-top:4px;"></div>
<div class="c" style="left:1428.0px;width:65.0px;padding-top:4px;"></div>
<div class="c" style="left:1493.0px;width:53.0px;padding-top:4px;"><span class="cb" style="left:50%;margin-left:-7.5px;top:5.5px"></span></div>
<div class="c" style="left:1546.0px;width:10.0px"></div>
</div>
<div class="row" style="top:151.0px;width:1554px;height:27.5px">
<div class="c" style="left:0px;width:53.8px;padding-top:4px;"><span class="cb" style="left:50%;margin-left:-7.5px;top:5.5px"></span></div>
<div class="c" style="left:53.8px;width:53.0px;padding-top:4px;"><span class="cb on" style="left:50%;margin-left:-7.5px;top:5.5px"></span></div>
<div class="c" style="left:106.8px;width:74.1px;padding-top:4px;"><span class="num">0000006</span></div>
<div class="c" style="left:180.89999999999998px;width:31.8px;padding-top:4px;">ПС</div>
<div class="c" style="left:212.7px;width:63.2px;padding-top:4px;"><span class="num">18.08.23</span></div>
<div class="c" style="left:275.9px;width:44.1px;padding-top:4px;"><span class="num">09:10</span></div>
<div class="c" style="left:320.0px;width:169.9px;padding-top:4px;">ЗАО "ЛюксСофтТорг"</div>
<div class="c" style="left:489.9px;width:169.1px;padding-top:4px;">ЛюксСофтТрейд2</div>
<div class="c" style="left:659.0px;width:169.9px;padding-top:4px;">ОДО "ЛюксСофтСервис"</div>
<div class="c" style="left:828.9px;width:169.9px;padding-top:4px;">Магазин 12</div>
<div class="c" style="left:998.8px;width:291.3px;padding-top:4px;">Расход на собственный магазин</div>
<div class="c" style="left:1290.1px;width:89.9px;padding-top:4px;">Белорусский</div>
<div class="c" style="left:1380.0px;width:48.0px;padding-top:4px;"></div>
<div class="c" style="left:1428.0px;width:65.0px;padding-top:4px;"></div>
<div class="c" style="left:1493.0px;width:53.0px;padding-top:4px;"><span class="cb" style="left:50%;margin-left:-7.5px;top:5.5px"></span></div>
<div class="c" style="left:1546.0px;width:10.0px"></div>
</div>
<div class="row sel" style="top:178.5px;width:1554px;height:27.5px">
<div class="c" style="left:0px;width:53.8px;padding-top:4px;"><span class="cb" style="left:50%;margin-left:-7.5px;top:5.5px"></span></div>
<div class="c" style="left:53.8px;width:53.0px;padding-top:4px;"><span class="cb on" style="left:50%;margin-left:-7.5px;top:5.5px"></span></div>
<div class="c" style="left:106.8px;width:74.1px;padding-top:4px;"><span class="num">002-202108</span></div>
<div class="c" style="left:180.89999999999998px;width:31.8px;padding-top:4px;"></div>
<div class="c" style="left:212.7px;width:63.2px;padding-top:4px;"><span class="num">14.08.23</span></div>
<div class="c" style="left:275.9px;width:44.1px;padding-top:4px;"><span class="num">00:00</span></div>
<div class="c" style="left:320.0px;width:169.9px;padding-top:4px;">ОДО "ЛюксСофтСервис"</div>
<div class="c" style="left:489.9px;width:169.1px;padding-top:4px;">Магазин 12</div>
<div class="c" style="left:659.0px;width:169.9px;padding-top:4px;"><span class="uc">ГП МОГОСТ</span></div>
<div class="c" style="left:828.9px;width:169.9px;padding-top:4px;"><span class="uc">Склад ГП МОГОСТ</span></div>
<div class="c" style="left:998.8px;width:291.3px;padding-top:4px;">оптовая отгрузка</div>
<div class="c" style="left:1290.1px;width:89.9px;padding-top:4px;">Белорусский</div>
<div class="c" style="left:1380.0px;width:48.0px;padding-top:4px;"></div>
<div class="c" style="left:1428.0px;width:65.0px;padding-top:4px;"><span class="num">Д-0005</span></div>
<div class="c" style="left:1493.0px;width:53.0px;padding-top:4px;"><span class="cb" style="left:50%;margin-left:-7.5px;top:5.5px"></span></div>
<div class="c" style="left:1546.0px;width:10.0px"></div>
</div>
<div class="abs" style="left:0;top:178px;width:54px;height:28px;border:1px solid #1889b8"></div>
<div class="abs" style="left:0;bottom:0;width:682px;height:10px;background:#dcdcdc"></div>
</div>
<div class="gb" style="left:269px;top:235px;width:1556px;height:292px;border:1px solid #1889b8"></div>
<div class="abs" style="left:269px;top:534px;width:28px;height:22px;background:#d6e6eb;border-radius:4px"></div>
<div class="tb" style="left:271.8px;top:535.500px"><svg width="22" height="20" viewBox="0 0 22 20" fill="none" stroke="#4c4c4c" stroke-width="1.4" stroke-linecap="round" stroke-linejoin="round"><path d="M8 3.500h12M8 10h12M8 16.500h12" stroke-width="1.700"/><rect x="1" y="1.700" width="3.600" height="3.600" rx="1" stroke="#45bff0"/><rect x="1" y="8.200" width="3.600" height="3.600" rx="1" stroke="#45bff0"/><rect x="1" y="14.700" width="3.600" height="3.600" rx="1" stroke="#45bff0"/></svg></div>
<div class="tb" style="left:299.2px;top:535.500px"><svg width="22" height="20" viewBox="0 0 22 20" fill="none" stroke="#4c4c4c" stroke-width="1.3" stroke-linecap="round" stroke-linejoin="round"><path d="M1 6.800h19M1 13.200h19M7.300 1v18M13.700 1v18" stroke="#45bff0"/><rect x="1" y="1" width="19" height="18"/></svg></div>
<div class="tb" style="left:327.3px;top:535.500px"><svg width="22" height="20" viewBox="0 0 22 20" fill="none" stroke="#4c4c4c" stroke-width="1.3" stroke-linecap="round" stroke-linejoin="round"><rect x="1" y="3.500" width="19" height="15.500" rx="1.500"/><path d="M1 8h19M5.500 1v4M15.500 1v4"/><path d="M4.500 13.500h12M7.500 10.500v6M13.500 10.500v6" stroke="#45bff0"/></svg></div>
<div class="tb" style="left:358.8px;top:535.500px"><svg width="22" height="20" viewBox="0 0 22 20" fill="none" stroke="#4c4c4c" stroke-width="1.5" stroke-linecap="round" stroke-linejoin="round"><path d="M1.500 3.500h19M5 9.500h12"/><path d="M8 15h6M10 19.500h2" stroke="#45bff0"/></svg></div>
<div class="tb" style="left:391.5px;top:535.500px"><svg width="22" height="20" viewBox="0 0 22 20" fill="none" stroke="#4c4c4c" stroke-width="1.4" stroke-linecap="round" stroke-linejoin="round"><path d="M20.23 8.87 L20.23 11.13 L17.74 11.87 L17.09 13.44 L18.33 15.73 L16.73 17.33 L14.44 16.09 L12.87 16.74 L12.13 19.23 L9.87 19.23 L9.13 16.74 L7.56 16.09 L5.27 17.33 L3.67 15.73 L4.91 13.44 L4.26 11.87 L1.77 11.13 L1.77 8.87 L4.26 8.13 L4.91 6.56 L3.67 4.27 L5.27 2.67 L7.56 3.91 L9.13 3.26 L9.87 0.77 L12.13 0.77 L12.87 3.26 L14.44 3.91 L16.73 2.67 L18.33 4.27 L17.09 6.56 L17.74 8.13z" stroke="#4c4c4c" stroke-width="1.5"/><circle cx="11" cy="10" r="2.800" stroke="#45bff0" stroke-width="1.600"/></svg></div>
<div class="tb" style="left:425.5px;top:535.500px"><svg width="22" height="20" viewBox="0 0 22 20" fill="none" stroke="#4c4c4c" stroke-width="1.4" stroke-linecap="round" stroke-linejoin="round"><path d="M8 3.500h12M8 10h12M8 16.500h12" stroke-width="1.600"/><g font-family="Liberation Sans,sans-serif" font-size="6.500" font-weight="bold" fill="#45bff0" stroke="none"><text x="0.500" y="5.800">1</text><text x="0.500" y="12.300">2</text><text x="0.500" y="18.800">3</text></g></svg></div>
<div class="tb" style="left:452.3px;top:535.500px"><svg width="22" height="20" viewBox="0 0 22 20" fill="none" stroke="#4c4c4c" stroke-width="1.4" stroke-linecap="round" stroke-linejoin="round"><path d="M1 2.500h19M1 8h19M1 13.500h10M1 18.500h7" stroke-width="1.500"/><path d="M13.500 16h7M17 12.500v7" stroke="#45bff0" stroke-width="1.500"/></svg></div>
<div class="tb" style="left:483.8px;top:535.500px"><svg width="22" height="20" viewBox="0 0 22 20" fill="none" stroke="#4c4c4c" stroke-width="1.5" stroke-linecap="round" stroke-linejoin="round"><path d="M9 4H1.500v15h15V11.500"/><path d="M13 1.500h7v7M20 1.500L9.500 12" stroke="#45bff0"/></svg></div>
<div class="tb" style="left:516.6px;top:535.500px"><svg width="22" height="20" viewBox="0 0 22 20" fill="none" stroke="#4c4c4c" stroke-width="1.5" stroke-linecap="round" stroke-linejoin="round"><path d="M4.500 18H1.500V4h13M11.500 1l3 3-3 3"/><path d="M17.500 5.500h3v13.500H8M11 16l-3 3 3 3" stroke="#45bff0"/></svg></div>
<span class="cb on" style="left:1212px;top:537px"></span><div class="lbl" style="left:1232px;top:538px;letter-spacing:-0.35px">Открыт (F6)</div>
<div class="btn" style="left:1316px;top:532px;width:92.7px"><span style="left:0;right:0;text-align:center;letter-spacing:-0.3px">Закрыть</span></div>
<div class="btn" style="left:1414.5px;top:532px;width:124.5px"><span style="left:40.5px">Добавить</span><span style="left:19.500px;top:6px"><svg width="13" height="13" viewBox="0 0 13 13" stroke="#555" stroke-width="1.700" stroke-linecap="butt"><path d="M6.500 0v13M0 6.500h13"/></svg></span></div>
<div class="abs" style="left:1415px;top:525px;width:127px;height:40.5px;border:3px solid #f73e3e"></div>
<div class="btn" style="left:1545.5px;top:532px;width:160px"><span style="left:40.5px;letter-spacing:-0.3px">Редактировать</span><span style="left:17px;top:5px"><svg width="16" height="16" viewBox="0 0 16 16" fill="none" stroke-linecap="round" stroke-linejoin="round"><path d="M1.600 12.200l1.200-3.800L10.300 1.200a1 1 0 0 1 1.400 0l1.500 1.500a1 1 0 0 1 0 1.400L5.500 11.300z" stroke="#444" stroke-width="1.400"/><path d="M8.800 2.800l2.800 2.800" stroke="#444" stroke-width="1.100"/><path d="M0.500 14.600h14" stroke="#45bff0" stroke-width="1.500"/></svg></span></div>
<div class="btn" style="left:1711.5px;top:532px;width:113.5px"><span style="left:40px;letter-spacing:-0.4px">Удалить</span><span style="left:18px;top:5.5px"><svg width="13" height="14" viewBox="0 0 13 14" stroke="#666" stroke-width="2" stroke-linecap="butt"><path d="M0 7h12.500"/></svg></span></div>
<div class="hl" style="left:267px;top:590px;width:1560px"></div>
<div class="tab on" style="left:270px;top:564px;width:129.5px;height:26px;padding-top:3px">Спецификация</div>
<div class="tab" style="left:404.5px;top:564px;width:84.5px;height:26px;padding-top:3px">История</div>
<div class="tab" style="left:493px;top:564px;width:148px;height:26px;padding-top:3px">Печатные формы</div>
<div class="tab" style="left:645px;top:564px;width:91px;height:26px;padding-top:3px">Действия</div>
<div class="grid" style="left:270px;top:597px;width:1554px;height:290px">
<div class="hc" style="left:0px;width:73.8px;height:67.5px;padding-top:3px"><div style="position:relative;top:-3.8px"><span style="padding-left:24px;display:block">Номе<br>р<br>строк</span></div></div>
<div class="hc" style="left:73.8px;width:129.2px;height:67.5px;padding-top:3px">Штрихкод</div>
<div class="hc" style="left:203.0px;width:89.8px;height:67.5px;padding-top:3px">Код</div>
<div class="hc" style="left:292.8px;width:251.0px;height:67.5px;padding-top:3px">Наименование</div>
<div class="hc" style="left:543.8px;width:32.1px;height:67.5px;padding-top:3px">Ед.<br>изм<br>.</div>
<div class="hc" style="left:575.9px;width:251.0px;height:67.5px;padding-top:3px">Основание</div>
<div class="hc" style="left:826.9px;width:169.8px;height:67.5px;padding-top:3px">Партия</div>
<div class="hc" style="left:996.7px;width:170.2px;height:67.5px;padding-top:3px">Наименование (для<br>документов)</div>
<div class="hc" style="left:1166.9px;width:65.0px;height:67.5px;padding-top:3px">Кол-во</div>
<div class="hc" style="left:1231.9px;width:64.1px;height:67.5px;padding-top:3px">Кол-во<br>(поставл<br>ено)</div>
<div class="hc" style="left:1296.0px;width:89.7px;height:67.5px;padding-top:3px">Кол-во<br>марок</div>
<div class="hc" style="left:1385.7px;width:90.1px;height:67.5px;padding-top:3px">Вид цен</div>
<div class="hc" style="left:1475.8px;width:65.2px;height:67.5px;padding-top:3px">Цена</div>
<div class="hc" style="left:1541.0px;width:15.0px;height:67.5px"></div>
<div class="row sel" style="top:67.5px;width:1554px;height:26px">
<div class="c r" style="left:0px;width:73.8px;padding-top:5px;"><span class="num">1</span></div>
<div class="c" style="left:73.8px;width:129.2px;padding-top:5px;"><span class="num">4813834007123</span></div>
<div class="c" style="left:203.0px;width:89.8px;padding-top:5px;"><span class="num">101001</span></div>
<div class="c" style="left:292.8px;width:251.0px;padding-top:5px;">Ботинки мужские Осенние РАДУГА</div>
<div class="c" style="left:543.8px;width:32.1px;padding-top:5px;">пор</div>
<div class="c" style="left:575.9px;width:251.0px;padding-top:5px;"></div>
<div class="c" style="left:826.9px;width:169.8px;padding-top:5px;"></div>
<div class="c" style="left:996.7px;width:170.2px;padding-top:5px;"></div>
<div class="c r" style="left:1166.9px;width:65.0px;padding-top:5px;"><span class="num">1</span></div>
<div class="c r" style="left:1231.9px;width:64.1px;padding-top:5px;background:#d5d5ee"><span class="num">1</span></div>
<div class="c r" style="left:1296.0px;width:89.7px;padding-top:5px;background:#c8e6d6"><span class="num">1</span></div>
<div class="c" style="left:1385.7px;width:90.1px;padding-top:5px;">Оптовая наценка</div>
<div class="c r" style="left:1475.8px;width:65.2px;padding-top:5px;"><span class="num">100</span></div>
<div class="c" style="left:1541.0px;width:15.0px"></div>
</div>
<span class="abs" style="left:2.8px;top:26px"><svg width="15.5" height="15.5" viewBox="0 0 16 16" fill="none" stroke="#45bff0" stroke-width="1.800" stroke-linecap="round" stroke-linejoin="round"><circle cx="8" cy="8" r="6.800" fill="#e4e4e4"/><path d="M5 9.500l3-3 3 3" stroke="#444" stroke-width="1.700"/></svg></span>
<div class="abs" style="left:0;bottom:0;width:968px;height:10px;background:#dcdcdc"></div>
</div>
<div class="gb" style="left:269px;top:596px;width:1556px;height:292px;border:1px solid #c9c9c9"></div>
<div class="abs" style="left:269px;top:891px;width:28px;height:23px;background:#d6e6eb;border-radius:4px"></div>
<div class="tb" style="left:271.8px;top:894.200px"><svg width="22" height="20" viewBox="0 0 22 20" fill="none" stroke="#4c4c4c" stroke-width="1.4" stroke-linecap="round" stroke-linejoin="round"><path d="M8 3.500h12M8 10h12M8 16.500h12" stroke-width="1.700"/><rect x="1" y="1.700" width="3.600" height="3.600" rx="1" stroke="#45bff0"/><rect x="1" y="8.200" width="3.600" height="3.600" rx="1" stroke="#45bff0"/><rect x="1" y="14.700" width="3.600" height="3.600" rx="1" stroke="#45bff0"/></svg></div>
<div class="tb" style="left:299.2px;top:894.200px"><svg width="22" height="20" viewBox="0 0 22 20" fill="none" stroke="#4c4c4c" stroke-width="1.3" stroke-linecap="round" stroke-linejoin="round"><path d="M1 6.800h19M1 13.200h19M7.300 1v18M13.700 1v18" stroke="#45bff0"/><rect x="1" y="1" width="19" height="18"/></svg></div>
<div class="tb" style="left:332px;top:894.200px"><svg width="22" height="20" viewBox="0 0 22 20" fill="none" stroke="#4c4c4c" stroke-width="1.5" stroke-linecap="round" stroke-linejoin="round"><path d="M1.500 3.500h19M5 9.500h12"/><path d="M8 15h6M10 19.500h2" stroke="#45bff0"/></svg></div>
<div class="tb" style="left:363.5px;top:894.200px"><svg width="22" height="20" viewBox="0 0 22 20" fill="none" stroke="#4c4c4c" stroke-width="1.4" stroke-linecap="round" stroke-linejoin="round"><path d="M20.23 8.87 L20.23 11.13 L17.74 11.87 L17.09 13.44 L18.33 15.73 L16.73 17.33 L14.44 16.09 L12.87 16.74 L12.13 19.23 L9.87 19.23 L9.13 16.74 L7.56 16.09 L5.27 17.33 L3.67 15.73 L4.91 13.44 L4.26 11.87 L1.77 11.13 L1.77 8.87 L4.26 8.13 L4.91 6.56 L3.67 4.27 L5.27 2.67 L7.56 3.91 L9.13 3.26 L9.87 0.77 L12.13 0.77 L12.87 3.26 L14.44 3.91 L16.73 2.67 L18.33 4.27 L17.09 6.56 L17.74 8.13z" stroke="#4c4c4c" stroke-width="1.5"/><circle cx="11" cy="10" r="2.800" stroke="#45bff0" stroke-width="1.600"/></svg></div>
<div class="tb" style="left:398.5px;top:894.200px"><svg width="22" height="20" viewBox="0 0 22 20" fill="none" stroke="#4c4c4c" stroke-width="1.4" stroke-linecap="round" stroke-linejoin="round"><path d="M8 3.500h12M8 10h12M8 16.500h12" stroke-width="1.600"/><g font-family="Liberation Sans,sans-serif" font-size="6.500" font-weight="bold" fill="#45bff0" stroke="none"><text x="0.500" y="5.800">1</text><text x="0.500" y="12.300">2</text><text x="0.500" y="18.800">3</text></g></svg></div>
<div class="tb" style="left:424.2px;top:894.200px"><svg width="22" height="20" viewBox="0 0 22 20" fill="none" stroke="#4c4c4c" stroke-width="1.4" stroke-linecap="round" stroke-linejoin="round"><path d="M1 2.500h19M1 8h19M1 13.500h10M1 18.500h7" stroke-width="1.500"/><path d="M13.500 16h7M17 12.500v7" stroke="#45bff0" stroke-width="1.500"/></svg></div>
<div class="tb" style="left:456.5px;top:894.200px"><svg width="22" height="20" viewBox="0 0 22 20" fill="none" stroke="#4c4c4c" stroke-width="1.5" stroke-linecap="round" stroke-linejoin="round"><path d="M9 4H1.500v15h15V11.500"/><path d="M13 1.500h7v7M20 1.500L9.500 12" stroke="#45bff0"/></svg></div>
<div class="tb" style="left:488.5px;top:894.200px"><svg width="22" height="20" viewBox="0 0 22 20" fill="none" stroke="#4c4c4c" stroke-width="1.5" stroke-linecap="round" stroke-linejoin="round"><path d="M4.500 18H1.500V4h13M11.500 1l3 3-3 3"/><path d="M17.500 5.500h3v13.500H8M11 16l-3 3 3 3" stroke="#45bff0"/></svg></div>
<span class="cb" style="left:1598px;top:895px"></span><div class="lbl" style="left:1618px;top:896px;letter-spacing:-0.26px">Непоставленные товары (F10)</div>
<div class="hl" style="left:267px;top:917px;width:1560px"></div>
<span class="cb" style="left:269px;top:929px;width:15px;height:15px"></span><div class="abs" style="left:280px;top:939px;border-style:solid;border-width:0 0 5px 5px;border-color:transparent transparent #1e8fc4 transparent"></div><div class="lbl" style="left:290.5px;top:928px;letter-spacing:0.04px">Включить корректировку на форме</div>
<div class="btn" style="left:1299px;top:923px;width:52px;height:27px"><span style="left:16.5px;top:5px"><svg width="16" height="15" viewBox="0 0 16 15" fill="none" stroke-linecap="round"><path d="M1.800 6.300A5.600 5.600 0 0 1 12.200 4" stroke="#333" stroke-width="2"/><path d="M15.600 0.200v6.400l-6.600-1.800z" fill="#333"/><path d="M14.200 8.700A5.600 5.600 0 0 1 3.800 11" stroke="#45bff0" stroke-width="2"/><path d="M0.400 14.800V8.400l6.600 1.800z" fill="#45bff0"/></svg></span></div>
<div class="btn" style="left:1356px;top:923px;width:132px;height:27px;color:#868686"><span style="left:40.5px;letter-spacing:-0.32px">Сохранить</span><span style="left:16.5px;top:4.5px"><svg width="16" height="16" viewBox="0 0 16 16" fill="none" stroke-linejoin="round"><path d="M3 1h7.800l3.600 3.300v8.300a2 2 0 0 1-2 2H3a2 2 0 0 1-2-2V3a2 2 0 0 1 2-2z" stroke="#4a4a4a" stroke-width="1.900"/><path d="M3.600 12.200V8.300h8.300v3.900" stroke="#45bff0" stroke-width="1.600"/></svg></span></div>
<div class="btn" style="left:1493px;top:923px;width:126px;height:27px;color:#868686"><span style="left:40.5px;letter-spacing:-0.3px">Отменить</span><span style="left:16.5px;top:4.5px"><svg width="16" height="16" viewBox="0 0 16 16" fill="none" stroke-linecap="butt" stroke-linejoin="round"><path d="M3.300 5v7.500a2 2 0 0 0 2 2h5.400a2 2 0 0 0 2-2V5" stroke="#4a4a4a" stroke-width="1.900"/><path d="M0.500 3.200h15M5.700 3V0.800h4.600V3" stroke="#45bff0" stroke-width="1.500"/></svg></span></div>
<div class="btn" style="left:1624px;top:923px;width:80px;height:27px"><span style="left:41px">OK</span><span style="left:18px;top:6px"><svg width="18" height="16" viewBox="0 0 18 16" fill="none" stroke="#444" stroke-width="1.600" stroke-linecap="round" stroke-linejoin="round"><path d="M1.500 9l4.500 4.500L16.500 2"/></svg></span></div>
<div class="btn" style="left:1709px;top:923px;width:116px;height:27px"><span style="left:41px;letter-spacing:-0.3px">Закрыть</span><span style="left:19px;top:7px"><svg width="12.5" height="12.5" viewBox="0 0 12.5 12.5" stroke="#333" stroke-width="1.7" stroke-linecap="round"><path d="M.8 .8L11.7 11.7M11.7 .8L.8 11.7"/></svg></span></div>
<div class="abs" style="left:1832px;top:77px;width:1px;height:878px;background:#d0d0d0"></div>
<div class="lbl" style="left:1838.5px;top:80px;width:90px;overflow:hidden"><span style="letter-spacing:1.300px">---</span> 14 авг. 2023</div>
<div class="lbl" style="left:1838.5px;top:100px">Изменения</div>
<div class="abs" style="left:1833px;top:945px;width:29px;height:10px;background:#dcdcdc"></div>
</body></html>
